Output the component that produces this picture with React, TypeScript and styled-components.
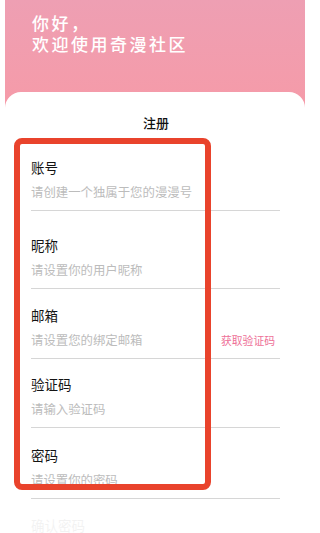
import React from "react";
import styled, { createGlobalStyle } from "styled-components";

const GlobalStyle = createGlobalStyle`
  html, body {
    margin: 0;
    padding: 0;
    background: #ffffff;
  }
  body {
    font-family: "Noto Sans CJK SC", "Noto Sans", sans-serif;
  }
  * { box-sizing: border-box; }
`;

const Page = styled.div`
  position: relative;
  width: 318px;
  height: 533px;
  overflow: hidden;
  background: #ffffff;
  padding: 0 13px 0 5px;
`;

const Screen = styled.div`
  display: flex;
  flex-direction: column;
  height: 100%;
  background: linear-gradient(180deg, #ee9fb3 0%, #f59ba9 100px, #f59ba9 100%);
`;

const Header = styled.div`
  height: 92px;
  padding: 12px 0 0 27px;
  flex-shrink: 0;
  display: flex;
  flex-direction: column;
`;

const Greeting = styled.div`
  color: #ffffff;
  font-size: 17px;
  line-height: 21px;
  height: 21px;
  letter-spacing: 2.5px;
  font-weight: 500;
`;

const Card = styled.div`
  flex: 1;
  background: #ffffff;
  border-radius: 16px 16px 0 0;
  padding: 22px 25px 0 26px;
  display: flex;
  flex-direction: column;
`;

const Title = styled.div`
  text-align: center;
  font-size: 13px;
  line-height: 18px;
  font-weight: 500;
  color: #111111;
  margin-left: 1px;
`;

const Field = styled.div<{ $top: number }>`
  padding-top: ${(p) => p.$top}px;
  padding-bottom: 9px;
  border-bottom: 1px solid #d6d6d6;
`;

const FaintField = styled.div`
  padding-top: 17px;
  opacity: 0.05;
`;

const Label = styled.div`
  font-size: 13.5px;
  line-height: 18px;
  color: #141414;
`;

const InputRow = styled.div`
  display: flex;
  align-items: center;
  justify-content: space-between;
  margin-top: 8px;
  padding-right: 5px;
`;

const Placeholder = styled.div`
  font-size: 12.4px;
  line-height: 17px;
  color: #bcbcbc;
`;

const CodeButton = styled.span`
  font-size: 10.8px;
  line-height: 17px;
  color: #ee7097;
`;

const Annotation = styled.div`
  position: absolute;
  left: 14px;
  top: 138px;
  width: 197px;
  height: 352px;
  border: 6px solid #e9432c;
  border-radius: 8px;
  pointer-events: none;
`;

type FieldData = {
  label: string;
  placeholder: string;
  top: number;
  action?: string;
};

const fields: FieldData[] = [
  { label: "账号", placeholder: "请创建一个独属于您的漫漫号", top: 26 },
  { label: "昵称", placeholder: "请设置你的用户昵称", top: 25 },
  { label: "邮箱", placeholder: "请设置您的绑定邮箱", top: 17, action: "获取验证码" },
  { label: "验证码", placeholder: "请输入验证码", top: 16 },
  { label: "密码", placeholder: "请设置你的密码", top: 18 },
];

export default function App() {
  return (
    <>
      <GlobalStyle />
      <Page>
        <Screen>
          <Header>
            <Greeting>你好，</Greeting>
            <Greeting>欢迎使用奇漫社区</Greeting>
          </Header>
          <Card>
            <Title>注册</Title>
            {fields.map((f) => (
              <Field key={f.label} $top={f.top}>
                <Label>{f.label}</Label>
                <InputRow>
                  <Placeholder>{f.placeholder}</Placeholder>
                  {f.action && <CodeButton>{f.action}</CodeButton>}
                </InputRow>
              </Field>
            ))}
            <FaintField>
              <Label>确认密码</Label>
            </FaintField>
          </Card>
        </Screen>
        <Annotation />
      </Page>
    </>
  );
}
